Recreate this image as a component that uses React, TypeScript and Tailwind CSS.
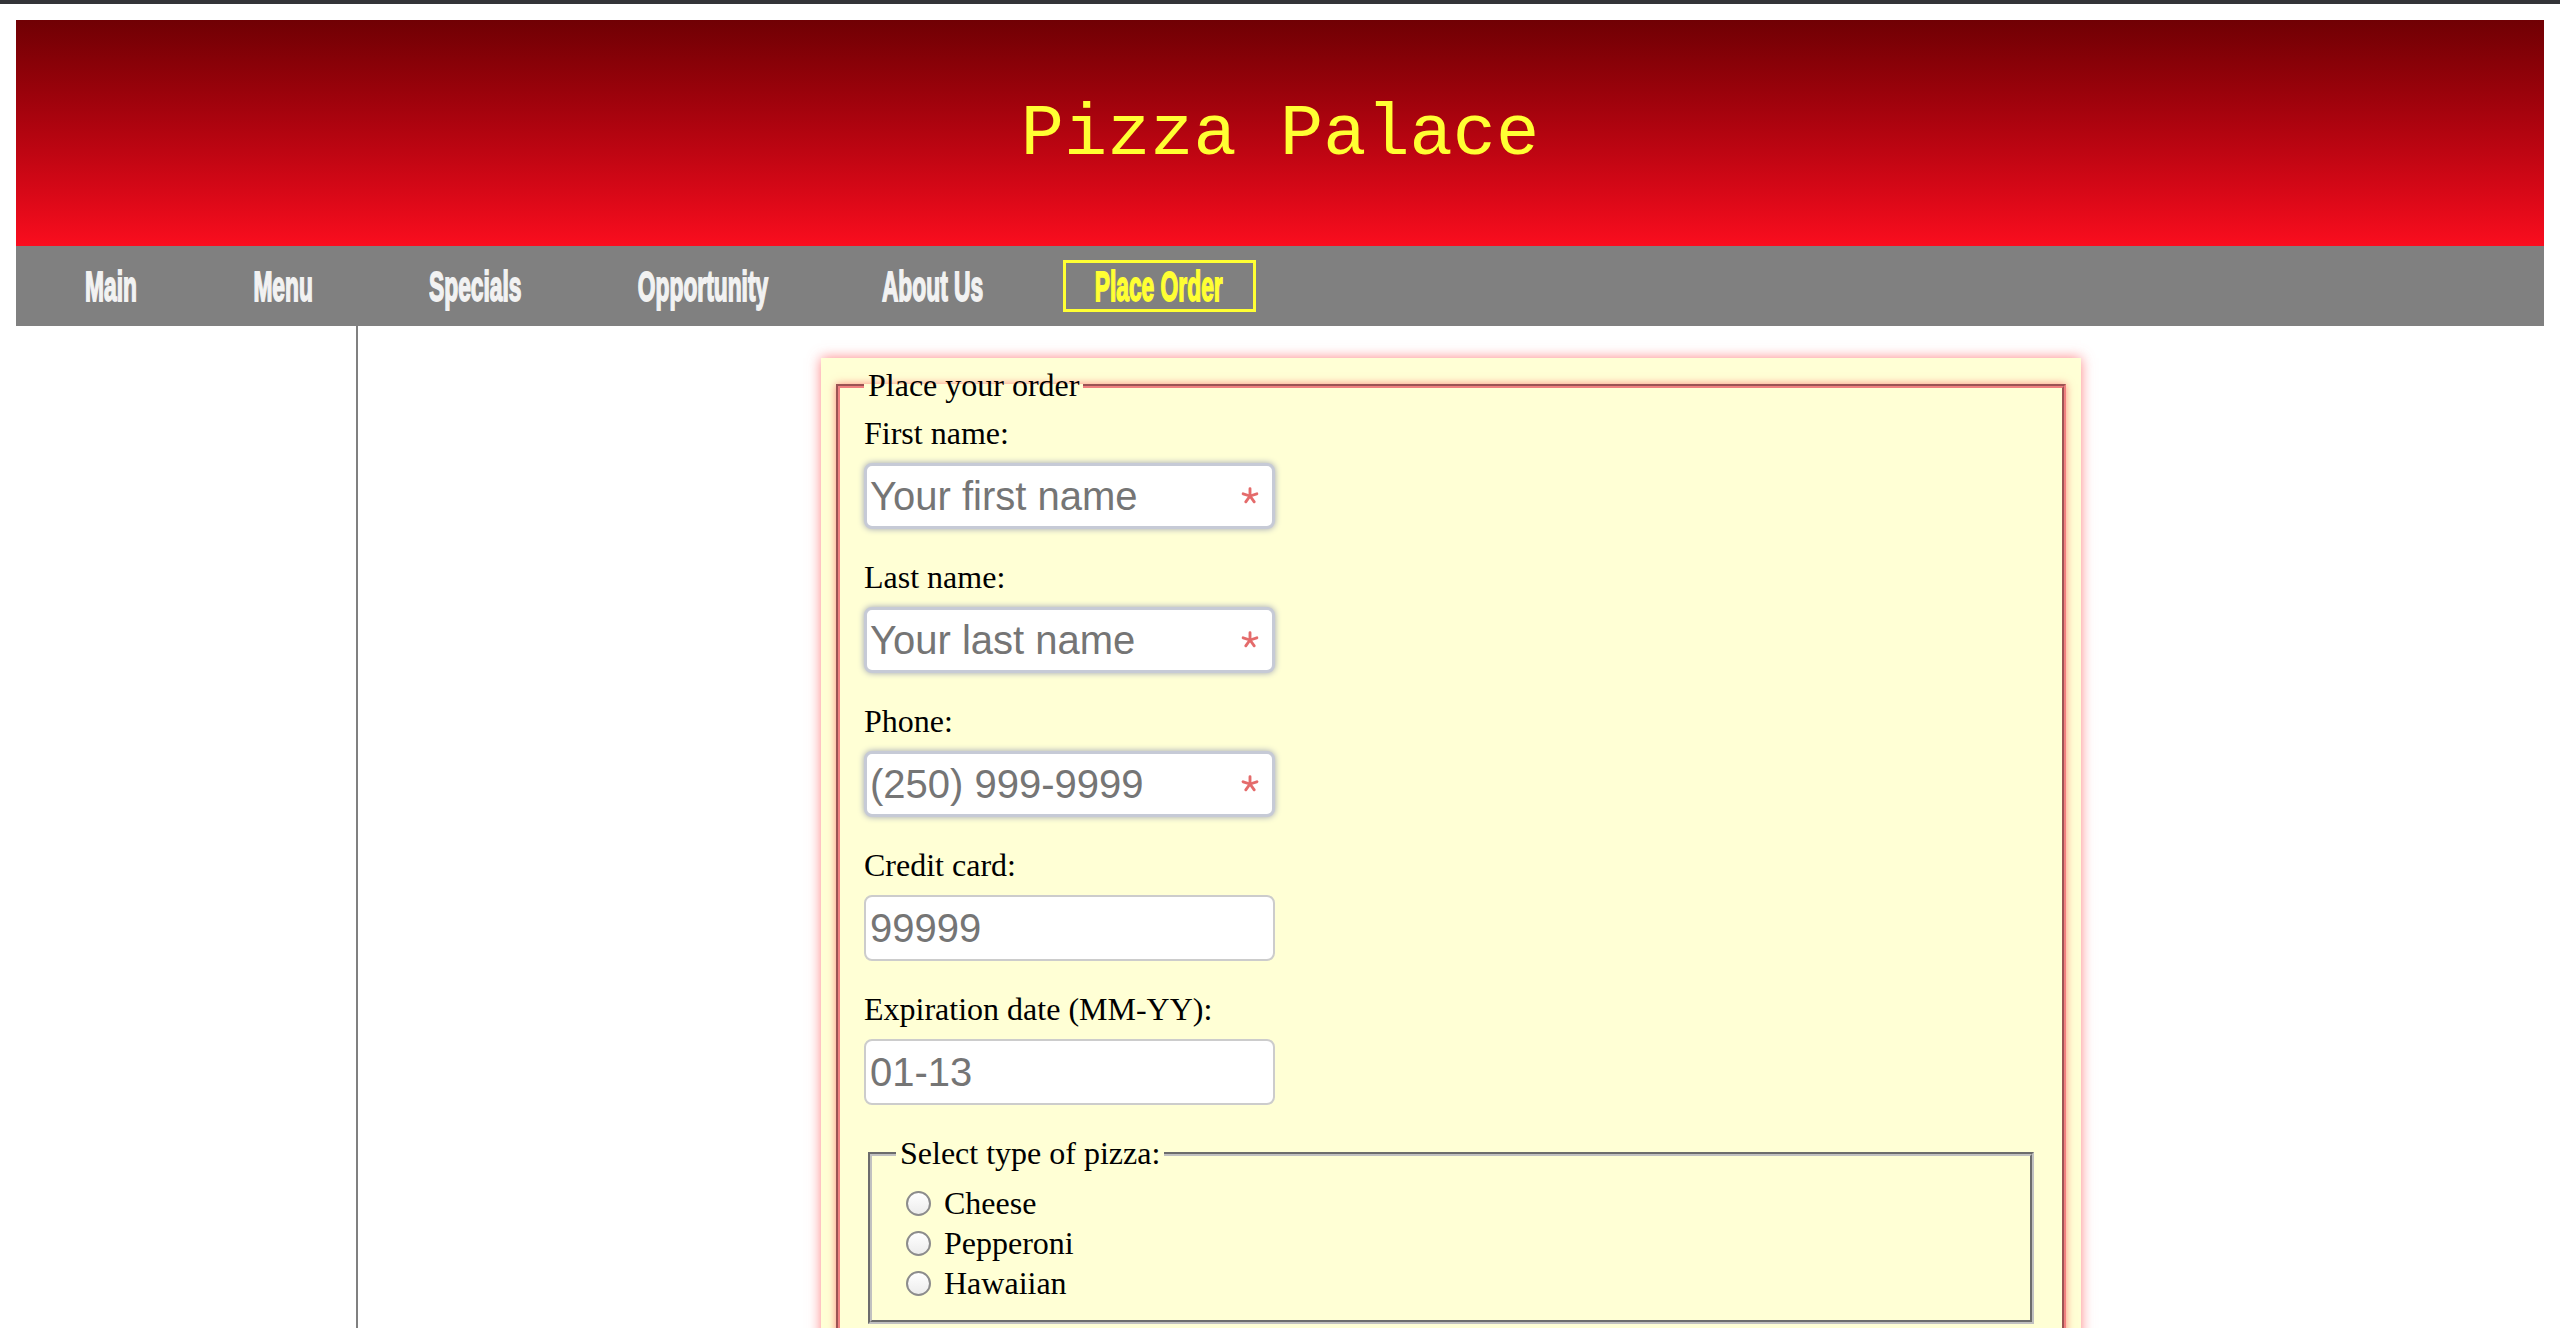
import { ReactNode } from 'react'

const navItems = [
  { label: 'Main', width: 'w-[123px]' },
  { label: 'Menu', width: 'w-[129px]' },
  { label: 'Specials', width: 'w-[163px]' },
  { label: 'Opportunity', width: 'w-[199px]' },
  { label: 'About Us', width: 'w-[167px]' },
]

const Asterisk = () => (
  <svg width="18" height="18" viewBox="-10 -10 20 20" className="absolute right-[16px] top-1/2 -translate-y-1/2">
    {[0, 72, 144, 216, 288].map((a) => (
      <line key={a} x1="0" y1="0" x2="0" y2="-8" stroke="#e46b6b" strokeWidth="3.2" strokeLinecap="round" transform={`rotate(${a})`} />
    ))}
  </svg>
)

const Field = ({ label, placeholder, required }: { label: string; placeholder: string; required?: boolean }) => (
  <div className="pb-[30px]">
    <label className="block leading-[37px]">{label}</label>
    <div className="relative mt-[11px] w-[411px]">
      <input
        type="text"
        placeholder={placeholder}
        className={
          required
            ? 'block h-[66px] w-full rounded-[8px] border-[3px] border-[#c6cad6] bg-white px-[3px] text-[40px] shadow-[0_0_6px_#9ea3b8] outline-none placeholder:text-[#757575]'
            : 'block h-[66px] w-full rounded-[8px] border-2 border-[#cccccc] bg-white px-[4px] text-[40px] outline-none placeholder:text-[#757575]'
        }
        style={{ fontFamily: '"Liberation Sans", Arial, sans-serif' }}
      />
      {required && <Asterisk />}
    </div>
  </div>
)

const Radio = ({ children }: { children: ReactNode }) => (
  <label className="flex h-[40px] items-center">
    <input
      type="radio"
      name="pizza"
      className="ml-[10px] h-[25px] w-[25px] shrink-0 appearance-none rounded-full border-2 border-[#8c8c8c] bg-gradient-to-b from-[#ffffff] to-[#ececec]"
    />
    <span className="ml-[13px]">{children}</span>
  </label>
)

export default function App() {
  return (
    <div className="min-h-screen bg-white text-[32px] text-black" style={{ fontFamily: '"Liberation Serif", "Times New Roman", serif' }}>
      <div className="h-[4px] bg-[#333438]" />
      <div className="px-[16px] pt-[16px]">
        {/* Header */}
        <header className="h-[226px] bg-gradient-to-b from-[#700004] to-[#fa0d1e] pt-[79px] text-center">
          <h1 className="text-[72px] leading-[72px] text-[#ffff33]" style={{ fontFamily: '"Liberation Mono", "Courier New", monospace' }}>
            Pizza Palace
          </h1>
        </header>

        {/* Nav */}
        <nav className="flex h-[80px] items-center gap-[46.5px] bg-[#808080] pl-[33px]" style={{ fontFamily: '"Liberation Sans", Arial, sans-serif' }}>
          {navItems.map((item) => (
            <a key={item.label} className={`flex h-[52px] items-center justify-center border-[3px] border-transparent ${item.width}`}>
              <span className="inline-block scale-x-[0.53] whitespace-nowrap text-[43px] font-bold text-[#f2f2f2] [-webkit-text-stroke:1.8px_#f2f2f2]">
                {item.label}
              </span>
            </a>
          ))}
          <a className="flex h-[52px] w-[193px] items-center justify-center border-[3px] border-[#ffff33]">
            <span className="inline-block scale-x-[0.53] whitespace-nowrap text-[43px] font-bold text-[#ffff33] [-webkit-text-stroke:1.8px_#ffff33]">
              Place Order
            </span>
          </a>
        </nav>

        <div className="flex">
          <aside className="w-[342px] shrink-0 border-r-2 border-[#808080]" />

          <main className="flex flex-1 justify-center pt-[32px] pb-[80px]">
            <div className="w-[1260px] bg-[#ffffd5] px-[15px] pt-[9px] pb-[40px] shadow-[0_0_12px_rgba(255,90,90,0.75)]">
              <form>
                <fieldset className="border-4 border-[#f08080] px-[24px] pt-[11px] pb-[140px] shadow-[0_0_8px_rgba(255,110,110,0.8)] [border-style:groove]">
                  <legend className="px-[4px] leading-[37px]">Place your order</legend>

                  <Field label="First name:" placeholder="Your first name" required />
                  <Field label="Last name:" placeholder="Your last name" required />
                  <Field label="Phone:" placeholder="(250) 999-9999" required />
                  <Field label="Credit card:" placeholder="99999" />
                  <Field label="Expiration date (MM-YY):" placeholder="01-13" />

                  <fieldset className="mx-[4px] border-4 border-[#c0c0c0] px-[24px] pt-[11px] pb-[17px] [border-style:groove]">
                    <legend className="px-[4px] leading-[37px]">Select type of pizza:</legend>
                    <Radio>Cheese</Radio>
                    <Radio>Pepperoni</Radio>
                    <Radio>Hawaiian</Radio>
                  </fieldset>
                </fieldset>
              </form>
            </div>
          </main>
        </div>
      </div>
    </div>
  )
}
